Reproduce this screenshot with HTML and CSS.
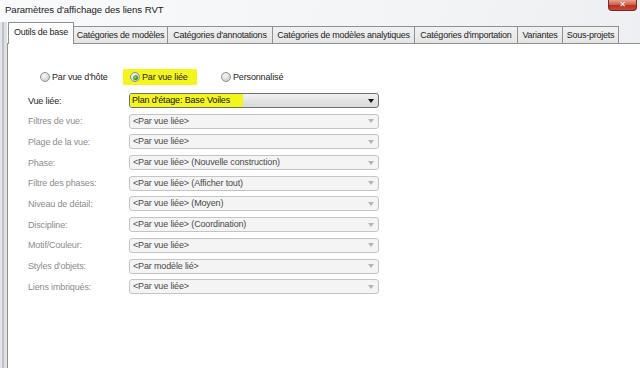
FILE: index.html
```html
<!DOCTYPE html>
<html lang="fr">
<head>
<meta charset="utf-8">
<title>Paramètres d'affichage des liens RVT</title>
<link rel="stylesheet" href="styles.css">
</head>
<body>
<div class="window">
  <div class="titlebar">
    <span class="title">Paramètres d'affichage des liens RVT</span>
    <span class="close">✕</span>
  </div>
  <div class="body">
    <div class="tabs">
      <div class="tab active t1">Outils de base</div>
      <div class="tab t2">Catégories de modèles</div>
      <div class="tab t3">Catégories d'annotations</div>
      <div class="tab t4">Catégories de modèles analytiques</div>
      <div class="tab t5">Catégories d'importation</div>
      <div class="tab t6">Variantes</div>
      <div class="tab t7">Sous-projets</div>
    </div>
    <div class="panel">
      <div class="radios">
        <label class="radio r1"><span class="dot"></span>Par vue d'hôte</label>
        <label class="radio r2 hl"><span class="dot checked"></span>Par vue liée</label>
        <label class="radio r3"><span class="dot"></span>Personnalisé</label>
      </div>
      <div class="form">
        <div class="lbl">Vue liée:</div>
        <div class="combo on"><span class="val hl">Plan d'étage: Base Voiles</span><span class="arrow"></span></div>
        <div class="lbl dis">Filtres de vue:</div>
        <div class="combo"><span class="val">&lt;Par vue liée&gt;</span><span class="arrow"></span></div>
        <div class="lbl dis">Plage de la vue:</div>
        <div class="combo"><span class="val">&lt;Par vue liée&gt;</span><span class="arrow"></span></div>
        <div class="lbl dis">Phase:</div>
        <div class="combo"><span class="val">&lt;Par vue liée&gt; (Nouvelle construction)</span><span class="arrow"></span></div>
        <div class="lbl dis">Filtre des phases:</div>
        <div class="combo"><span class="val">&lt;Par vue liée&gt; (Afficher tout)</span><span class="arrow"></span></div>
        <div class="lbl dis">Niveau de détail:</div>
        <div class="combo"><span class="val">&lt;Par vue liée&gt; (Moyen)</span><span class="arrow"></span></div>
        <div class="lbl dis">Discipline:</div>
        <div class="combo"><span class="val">&lt;Par vue liée&gt; (Coordination)</span><span class="arrow"></span></div>
        <div class="lbl dis">Motif/Couleur:</div>
        <div class="combo"><span class="val">&lt;Par vue liée&gt;</span><span class="arrow"></span></div>
        <div class="lbl dis">Styles d'objets:</div>
        <div class="combo"><span class="val">&lt;Par modèle lié&gt;</span><span class="arrow"></span></div>
        <div class="lbl dis">Liens imbriqués:</div>
        <div class="combo"><span class="val">&lt;Par vue liée&gt;</span><span class="arrow"></span></div>
      </div>
    </div>
  </div>
</div>
</body>
</html>
```
FILE: styles.css
```css
* { box-sizing: border-box; }
html, body { margin: 0; padding: 0; }
body {
  width: 640px;
  height: 368px;
  overflow: hidden;
  font-family: "Liberation Sans", Arial, sans-serif;
  font-size: 9px;
  letter-spacing: -0.15px;
  color: #1e1e1e;
  background: #f4f5f7;
}
.window {
  width: 640px;
  height: 368px;
  display: flex;
  flex-direction: column;
  background: linear-gradient(100deg, #f9fafb 0%, #f3f4f6 60%, #eceef1 100%);
}
.titlebar {
  height: 22px;
  flex: none;
  display: flex;
  justify-content: space-between;
  align-items: flex-start;
  padding-left: 5px;
  padding-right: 3px;
}
.title {
  margin-top: 4px;
  color: #1a1a1a;
  font-size: 9.6px;
  letter-spacing: -0.05px;
}
.close {
  width: 29px;
  height: 11px;
  border: 1px solid #7a2a22;
  border-top: none;
  border-radius: 0 0 4px 4px;
  background: linear-gradient(#e6a395 0%, #d2614d 45%, #b8321f 55%, #c84a33 100%);
  color: #fff;
  font-size: 8px;
  line-height: 10px;
  text-align: center;
  font-weight: bold;
  letter-spacing: 0;
  font-family: "DejaVu Sans", sans-serif;
}
.body {
  flex: 1;
  display: flex;
  flex-direction: column;
  padding-left: 7px;
  background: linear-gradient(to right, #e4e5e7 0, #e4e5e7 2px, #bfc1c4 2px, #bfc1c4 4px, #dfe0e3 4px, #dfe0e3 7px, transparent 7px);
}
.tabs {
  height: 21px;
  flex: none;
  display: flex;
  align-items: flex-end;
  padding-left: 1px;
  position: relative;
  z-index: 1;
}
.tab {
  height: 17px;
  padding: 0;
  border: 1px solid #8e9096;
  border-bottom: none;
  border-left: none;
  background: linear-gradient(#f2f2f2, #e4e4e4);
  line-height: 16px;
  white-space: nowrap;
  color: #1e1e1e;
  flex: none;
  overflow: hidden;
  text-align: center;
  letter-spacing: -0.25px;
}
.tab.active {
  border-left: 1px solid #8e9096;
  background: #fff;
  line-height: 19px;
  margin-bottom: -1px;
  height: 22px;
}
.t1 { width: 66px; }
.t2 { width: 94px; }
.t3 { width: 105px; }
.t4 { width: 142px; }
.t5 { width: 103px; }
.t6 { width: 45px; }
.t7 { width: 56px; }
.panel {
  flex: 1;
  background: #fff;
  border-top: 1px solid #8e9096;
  border-left: 1px solid #8e9096;
  padding: 25px 0 0 20px;
}
.radios {
  display: flex;
  align-items: center;
  height: 16px;
  padding-left: 12px;
}
.radio {
  display: flex;
  align-items: center;
  height: 16px;
  white-space: nowrap;
}
.r1 { width: 83px; }
.r2 { width: 74px; padding-left: 7px; }
.r3 { margin-left: 24px; }
.hl { background: #f4f51a; }
.dot {
  width: 10px;
  height: 10px;
  border-radius: 50%;
  border: 1px solid #8c9096;
  background: radial-gradient(circle at 35% 30%, #f6f6f6 0%, #dcdcdc 55%, #c4c4c4 100%);
  margin-right: 2px;
  flex: none;
  position: relative;
}
.dot.checked::after {
  content: "";
  position: absolute;
  left: 1.5px;
  top: 1.5px;
  width: 5px;
  height: 5px;
  border-radius: 50%;
  background: radial-gradient(circle at 40% 40%, #8fe070 0%, #34922a 60%, #1d5e16 100%);
}
.form {
  margin-top: 8px;
  display: grid;
  grid-template-columns: 101px 250px;
  grid-auto-rows: 15px;
  row-gap: 5.7px;
  align-items: center;
}
.lbl {
  color: #1e1e1e;
  white-space: nowrap;
}
.lbl.dis { color: #8c8c8c; }
.combo {
  height: 15px;
  border: 1px solid #c4c5c7;
  border-radius: 3px;
  background: #f4f4f4;
  display: flex;
  align-items: center;
  justify-content: space-between;
  padding: 0 4px 0 2px;
  color: #4a4a4a;
  white-space: nowrap;
}
.combo.on {
  border-color: #707070;
  background: linear-gradient(#f3f3f3, #e3e3e3 50%, #d9d9d9);
  color: #111;
  padding-left: 0;
  overflow: hidden;
}
.val { line-height: 13px; padding-left: 1px; }
.combo.on .val { width: 113px; height: 13px; padding-left: 2px; }
.arrow {
  width: 0;
  height: 0;
  border-left: 3.5px solid transparent;
  border-right: 3.5px solid transparent;
  border-top: 4px solid #b4b4b4;
}
.combo.on .arrow { border-top-color: #111; }
```
